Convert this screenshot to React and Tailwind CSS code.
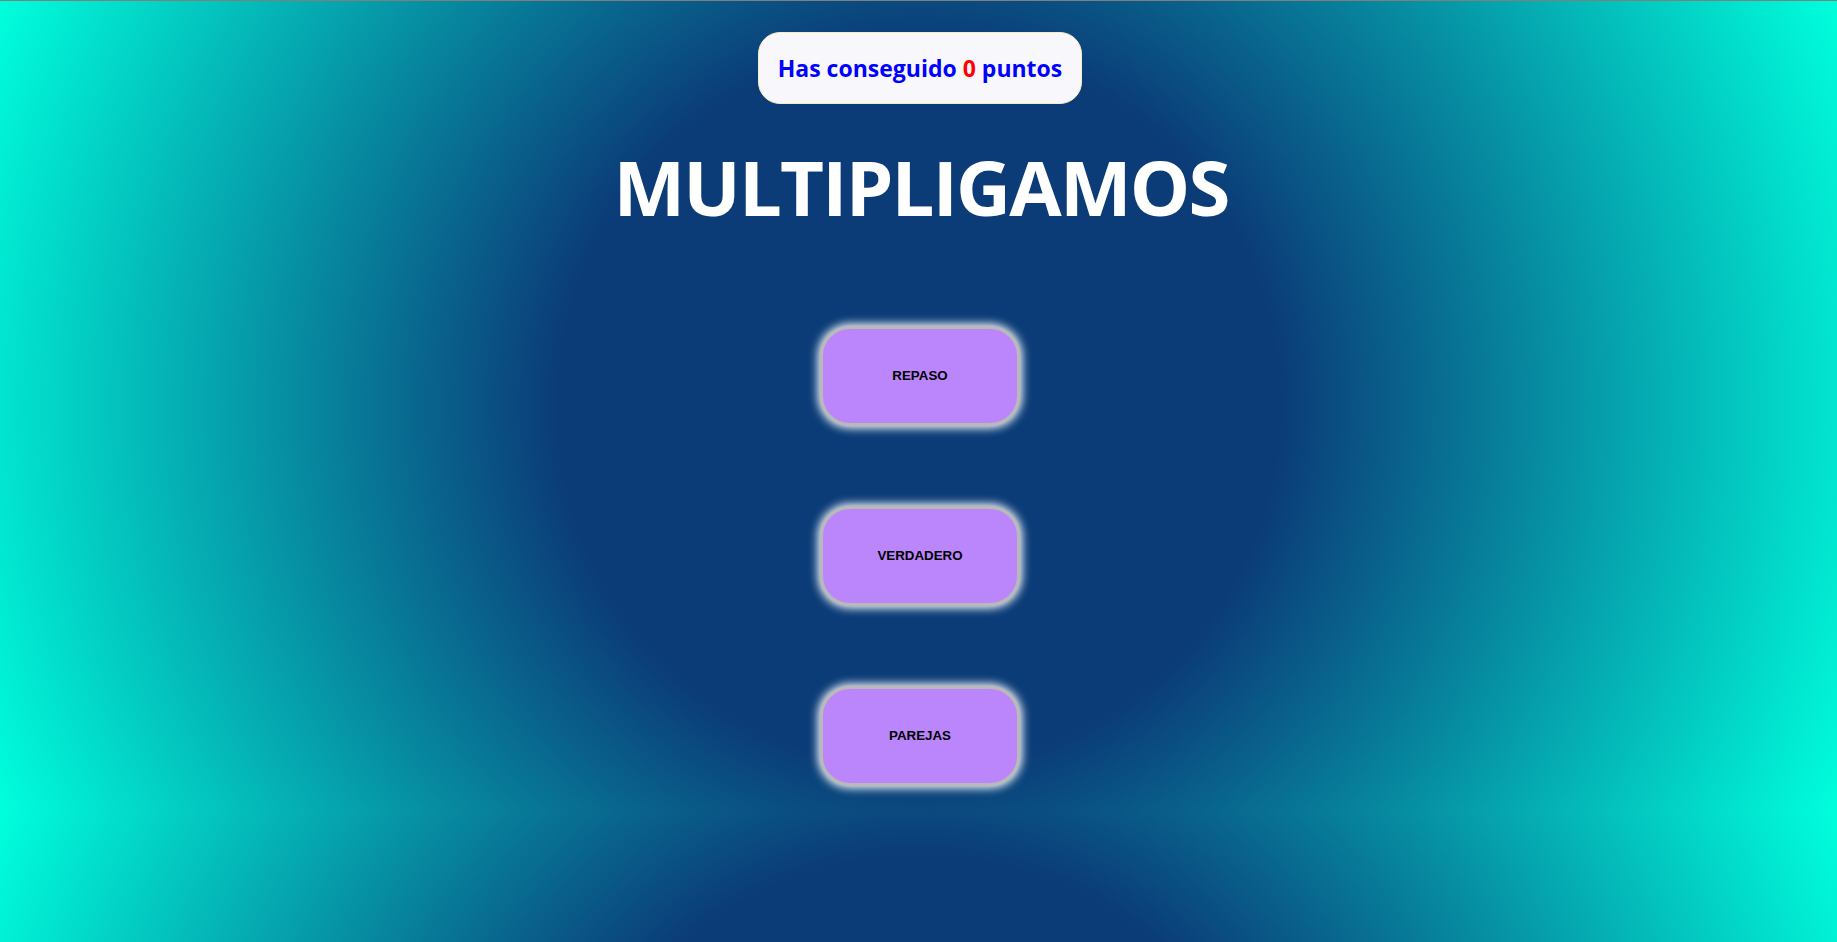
import React from "react";

function MenuButton({ label }) {
  return (
    <button
      type="button"
      className="w-[200px] h-[100px] rounded-[30px] border-[3px] border-[#b9b9b9] bg-[#bb86fc] shadow-[0_0_10px_2px_#ffffff] flex items-center justify-center font-['Liberation_Sans',Arial,sans-serif] text-[13.333px] font-bold text-black"
    >
      {label}
    </button>
  );
}

export default function App() {
  return (
    <div className="h-screen w-full overflow-hidden border-t border-[#7f7f7f] bg-[radial-gradient(circle,#0b3c78_36%,#00ffdd)] bg-[length:100%_810px] bg-repeat">
      <div className="flex flex-col items-center pl-[3px]">
        <div className="mt-[31px] w-[324px] h-[72px] rounded-[22px] border border-[#f3efc0] bg-[#f8f8fc] flex items-center justify-center font-['Open_Sans',sans-serif] text-[23px] font-bold text-[#0000ff] leading-none">
          <span>
            Has conseguido <span className="text-[#ff0000]">0</span> puntos
          </span>
        </div>
        <h1 className="mt-[45px] h-[76px] pl-[2px] font-['Open_Sans',sans-serif] text-[76px] leading-none font-bold tracking-[-1.8px] text-white">
          MULTIPLIGAMOS
        </h1>
        <div className="mt-[101px] flex flex-col items-center gap-[80px]">
          <MenuButton label="REPASO" />
          <MenuButton label="VERDADERO" />
          <MenuButton label="PAREJAS" />
        </div>
      </div>
    </div>
  );
}
